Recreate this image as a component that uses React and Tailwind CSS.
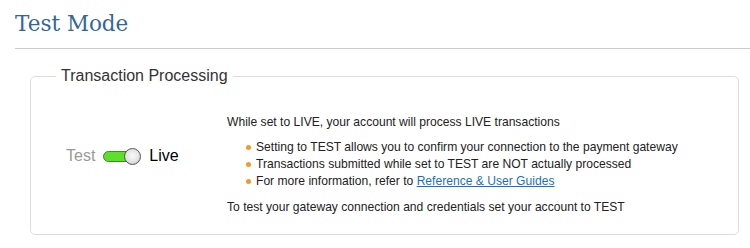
import React from 'react';

const bullets = [
  { text: 'Setting to TEST allows you to confirm your connection to the payment gateway' },
  { text: 'Transactions submitted while set to TEST are NOT actually processed' },
  { text: 'For more information, refer to ', link: 'Reference & User Guides' },
];

function Toggle() {
  return (
    <div className="relative w-[38px] h-[17px] flex items-center">
      <div className="w-[33px] h-[11px] rounded-full bg-[#5ee02a] border border-[#3a8f1a]" />
      <div className="absolute right-0 top-0 w-[17px] h-[17px] rounded-full border border-[#555] bg-[radial-gradient(circle_at_50%_45%,#fafafa_0%,#e4e4e4_55%,#b8b8b8_100%)]" />
    </div>
  );
}

export default function App() {
  return (
    <div className="w-[750px] h-[248px] bg-white overflow-hidden font-['Liberation_Sans',Arial,sans-serif]">
      <div className="pl-[15px]">
        <h1 className="pt-[9px] pb-[9px] text-[21.5px] leading-[30px] text-[#336699] font-['DejaVu_Serif',serif] border-b border-[#cccccc]">
          Test Mode
        </h1>
      </div>

      <fieldset className="mt-[18px] ml-[30px] mr-[11px] border border-[#dddddd] rounded-[5px] px-0 pb-[18px]">
        <legend className="ml-[25px] px-[5px] text-[16px] leading-[18px] text-[#333333]">Transaction Processing</legend>

        <div className="flex items-center pt-[29px]">
          <div className="w-[196px] flex items-center pl-[35px] pb-[18px]">
            <span className="text-[16px] text-[#999999]">Test</span>
            <span className="ml-[8px]"><Toggle /></span>
            <span className="ml-[8px] text-[16px] text-black">Live</span>
          </div>

          <div className="text-[12.1px] leading-[17px] text-[#222222]">
            <p>While set to LIVE, your account will process LIVE transactions</p>
            <ul className="mt-[8px] pl-[19px]">
              {bullets.map((b, i) => (
                <li key={i} className="flex items-center">
                  <span className="w-[5px] h-[5px] rounded-full bg-[#f39a26] mr-[5px]" />
                  <span>
                    {b.text}
                    {b.link && <a href="#" className="text-[#1a6fc9] underline">{b.link}</a>}
                  </span>
                </li>
              ))}
            </ul>
            <p className="mt-[9px]">To test your gateway connection and credentials set your account to TEST</p>
          </div>
        </div>
      </fieldset>
    </div>
  );
}
